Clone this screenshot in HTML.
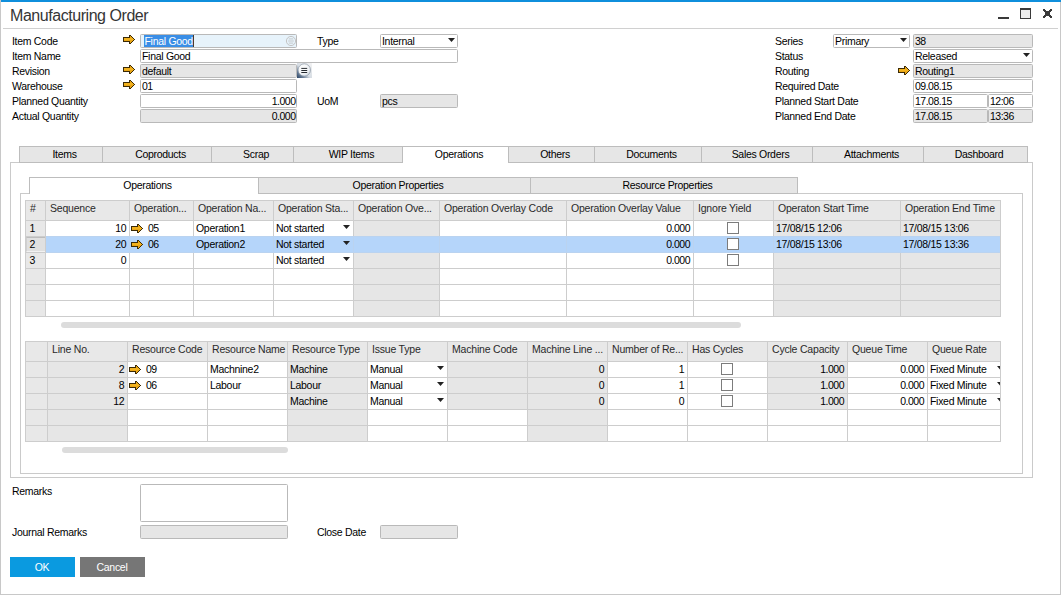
<!DOCTYPE html><html><head><meta charset="utf-8"><style>
html,body{margin:0;padding:0;}
body{width:1061px;height:595px;position:relative;overflow:hidden;background:#fff;font-family:"Liberation Sans",sans-serif;}
.t{position:absolute;white-space:nowrap;line-height:1;letter-spacing:-0.3px;}
.r{position:absolute;box-sizing:border-box;}
</style></head><body>
<div class="r" style="left:1px;top:0px;width:1060px;height:2px;background:#0f8fdc;"></div>
<div class="r" style="left:0px;top:0px;width:1px;height:595px;background:#c8c8c8;"></div>
<div class="r" style="left:1060px;top:2px;width:1px;height:593px;background:#c8c8c8;"></div>
<div class="r" style="left:0px;top:594px;width:1061px;height:1px;background:#c8c8c8;"></div>
<div class="t" style="left:10px;top:8.16px;font-size:16px;color:#353535;letter-spacing:-0.45px;">Manufacturing Order</div>
<div class="r" style="left:3px;top:28px;width:1055px;height:1px;background:#d0d0d0;"></div>
<div class="r" style="left:998px;top:17px;width:11px;height:2px;background:#3a3a3a;"></div>
<div class="r" style="left:1020px;top:8px;width:11px;height:11px;background:#ececec;border:1px solid #3a3a3a;border-top-width:2px;"></div>
<svg class="r" style="left:1043px;top:9px" width="9" height="9" viewBox="0 0 9 9" shape-rendering="crispEdges" fill="#3a3a3a"><rect x="0" y="0" width="2" height="1"/><rect x="7" y="0" width="2" height="1"/><rect x="0" y="1" width="3" height="1"/><rect x="6" y="1" width="3" height="1"/><rect x="1" y="2" width="7" height="1"/><rect x="2" y="3" width="5" height="1"/><rect x="2" y="4" width="5" height="1"/><rect x="2" y="5" width="5" height="1"/><rect x="1" y="6" width="7" height="1"/><rect x="0" y="7" width="3" height="1"/><rect x="6" y="7" width="3" height="1"/><rect x="0" y="8" width="2" height="1"/><rect x="7" y="8" width="2" height="1"/></svg>
<div class="t" style="left:12px;top:36.11px;font-size:10.5px;color:#000;">Item Code</div>
<div class="t" style="left:12px;top:51.11px;font-size:10.5px;color:#000;">Item Name</div>
<div class="t" style="left:12px;top:66.11px;font-size:10.5px;color:#000;">Revision</div>
<div class="t" style="left:12px;top:81.11px;font-size:10.5px;color:#000;">Warehouse</div>
<div class="t" style="left:12px;top:96.11px;font-size:10.5px;color:#000;">Planned Quantity</div>
<div class="t" style="left:12px;top:111.11px;font-size:10.5px;color:#000;">Actual Quantity</div>
<svg class="r" style="left:123px;top:35px" width="12" height="9" viewBox="0 0 12 9" shape-rendering="crispEdges"><rect x="6" y="0" width="2" height="1" fill="#3b2a06"/><rect x="6" y="1" width="1" height="1" fill="#3b2a06"/><rect x="7" y="1" width="1" height="1" fill="#e9a514"/><rect x="8" y="1" width="1" height="1" fill="#3b2a06"/><rect x="0" y="2" width="7" height="1" fill="#3b2a06"/><rect x="7" y="2" width="2" height="1" fill="#e9a514"/><rect x="9" y="2" width="1" height="1" fill="#3b2a06"/><rect x="0" y="3" width="1" height="1" fill="#3b2a06"/><rect x="1" y="3" width="9" height="1" fill="#f2b21e"/><rect x="10" y="3" width="1" height="1" fill="#3b2a06"/><rect x="0" y="4" width="1" height="1" fill="#3b2a06"/><rect x="1" y="4" width="10" height="1" fill="#f2b21e"/><rect x="11" y="4" width="1" height="1" fill="#3b2a06"/><rect x="0" y="5" width="1" height="1" fill="#3b2a06"/><rect x="1" y="5" width="9" height="1" fill="#e9a514"/><rect x="10" y="5" width="1" height="1" fill="#3b2a06"/><rect x="0" y="6" width="7" height="1" fill="#3b2a06"/><rect x="7" y="6" width="2" height="1" fill="#e9a514"/><rect x="9" y="6" width="1" height="1" fill="#3b2a06"/><rect x="6" y="7" width="1" height="1" fill="#3b2a06"/><rect x="7" y="7" width="1" height="1" fill="#e9a514"/><rect x="8" y="7" width="1" height="1" fill="#3b2a06"/><rect x="6" y="8" width="2" height="1" fill="#3b2a06"/></svg>
<svg class="r" style="left:123px;top:65px" width="12" height="9" viewBox="0 0 12 9" shape-rendering="crispEdges"><rect x="6" y="0" width="2" height="1" fill="#3b2a06"/><rect x="6" y="1" width="1" height="1" fill="#3b2a06"/><rect x="7" y="1" width="1" height="1" fill="#e9a514"/><rect x="8" y="1" width="1" height="1" fill="#3b2a06"/><rect x="0" y="2" width="7" height="1" fill="#3b2a06"/><rect x="7" y="2" width="2" height="1" fill="#e9a514"/><rect x="9" y="2" width="1" height="1" fill="#3b2a06"/><rect x="0" y="3" width="1" height="1" fill="#3b2a06"/><rect x="1" y="3" width="9" height="1" fill="#f2b21e"/><rect x="10" y="3" width="1" height="1" fill="#3b2a06"/><rect x="0" y="4" width="1" height="1" fill="#3b2a06"/><rect x="1" y="4" width="10" height="1" fill="#f2b21e"/><rect x="11" y="4" width="1" height="1" fill="#3b2a06"/><rect x="0" y="5" width="1" height="1" fill="#3b2a06"/><rect x="1" y="5" width="9" height="1" fill="#e9a514"/><rect x="10" y="5" width="1" height="1" fill="#3b2a06"/><rect x="0" y="6" width="7" height="1" fill="#3b2a06"/><rect x="7" y="6" width="2" height="1" fill="#e9a514"/><rect x="9" y="6" width="1" height="1" fill="#3b2a06"/><rect x="6" y="7" width="1" height="1" fill="#3b2a06"/><rect x="7" y="7" width="1" height="1" fill="#e9a514"/><rect x="8" y="7" width="1" height="1" fill="#3b2a06"/><rect x="6" y="8" width="2" height="1" fill="#3b2a06"/></svg>
<svg class="r" style="left:123px;top:80px" width="12" height="9" viewBox="0 0 12 9" shape-rendering="crispEdges"><rect x="6" y="0" width="2" height="1" fill="#3b2a06"/><rect x="6" y="1" width="1" height="1" fill="#3b2a06"/><rect x="7" y="1" width="1" height="1" fill="#e9a514"/><rect x="8" y="1" width="1" height="1" fill="#3b2a06"/><rect x="0" y="2" width="7" height="1" fill="#3b2a06"/><rect x="7" y="2" width="2" height="1" fill="#e9a514"/><rect x="9" y="2" width="1" height="1" fill="#3b2a06"/><rect x="0" y="3" width="1" height="1" fill="#3b2a06"/><rect x="1" y="3" width="9" height="1" fill="#f2b21e"/><rect x="10" y="3" width="1" height="1" fill="#3b2a06"/><rect x="0" y="4" width="1" height="1" fill="#3b2a06"/><rect x="1" y="4" width="10" height="1" fill="#f2b21e"/><rect x="11" y="4" width="1" height="1" fill="#3b2a06"/><rect x="0" y="5" width="1" height="1" fill="#3b2a06"/><rect x="1" y="5" width="9" height="1" fill="#e9a514"/><rect x="10" y="5" width="1" height="1" fill="#3b2a06"/><rect x="0" y="6" width="7" height="1" fill="#3b2a06"/><rect x="7" y="6" width="2" height="1" fill="#e9a514"/><rect x="9" y="6" width="1" height="1" fill="#3b2a06"/><rect x="6" y="7" width="1" height="1" fill="#3b2a06"/><rect x="7" y="7" width="1" height="1" fill="#e9a514"/><rect x="8" y="7" width="1" height="1" fill="#3b2a06"/><rect x="6" y="8" width="2" height="1" fill="#3b2a06"/></svg>
<div class="r" style="left:140px;top:34px;width:157px;height:14px;background:#e7f3fb;border:1px solid #b9b9b9;border-radius:1.5px;"></div>
<div class="r" style="left:144px;top:35px;width:49px;height:12px;background:#3a8ee6;"></div>
<div class="t" style="left:144.5px;top:36.11px;font-size:10.5px;color:#fff;">Final Good</div>
<div class="r" style="left:193px;top:35px;width:1px;height:12px;background:#4a3a2a;"></div>
<svg class="r" style="left:285px;top:35px" width="12" height="12" viewBox="0 0 12 12"><circle cx="6" cy="6" r="4.6" fill="none" stroke="#c4c4c4" stroke-width="1"/><path d="M3.8 3.9H8.2M3.2 6H8.8M3.8 8.1H8.2" stroke="#b8b8b8" stroke-width="0.7"/></svg>
<div class="r" style="left:140px;top:49px;width:318px;height:14px;background:#fff;border:1px solid #b9b9b9;border-radius:1.5px;"></div>
<div class="t" style="left:142px;top:51.11px;font-size:10.5px;color:#000;">Final Good</div>
<div class="r" style="left:140px;top:64px;width:157px;height:14px;background:#e6e6e6;border:1px solid #b9b9b9;border-radius:1.5px;"></div>
<div class="t" style="left:142px;top:66.11px;font-size:10.5px;color:#000;">default</div>
<svg class="r" style="left:297px;top:63px" width="15" height="15" viewBox="0 0 15 15"><defs><linearGradient id="g1" x1="0" y1="1" x2="1" y2="0"><stop offset="0" stop-color="#2a4464"/><stop offset="0.22" stop-color="#6a7e98"/><stop offset="0.45" stop-color="#d6dce3"/><stop offset="1" stop-color="#f4f4f4"/></linearGradient><radialGradient id="g2" cx="0.4" cy="0.35" r="0.7"><stop offset="0" stop-color="#ffffff"/><stop offset="0.7" stop-color="#eef1f4"/><stop offset="1" stop-color="#c9d2dc"/></radialGradient></defs><rect x="0" y="0" width="15" height="15" fill="url(#g1)"/><circle cx="7.3" cy="7" r="6.2" fill="url(#g2)" stroke="#7d8a98" stroke-width="0.6"/><path d="M4.3 5.4H10.2M4.3 7.5H10.2M4.3 9.5H10.2" stroke="#252a30" stroke-width="1"/></svg>
<div class="r" style="left:140px;top:79px;width:157px;height:14px;background:#fff;border:1px solid #b9b9b9;border-radius:1.5px;"></div>
<div class="t" style="left:142px;top:81.11px;font-size:10.5px;color:#000;letter-spacing:-0.5px;">01</div>
<div class="r" style="left:140px;top:94px;width:157px;height:14px;background:#fff;border:1px solid #b9b9b9;border-radius:1.5px;"></div>
<div class="t" style="right:765.5px;top:96.11px;font-size:10.5px;color:#000;text-align:right;letter-spacing:-0.5px;">1.000</div>
<div class="r" style="left:140px;top:109px;width:157px;height:14px;background:#e6e6e6;border:1px solid #b9b9b9;border-radius:1.5px;"></div>
<div class="t" style="right:765.5px;top:111.11px;font-size:10.5px;color:#000;text-align:right;letter-spacing:-0.5px;">0.000</div>
<div class="t" style="left:317px;top:36.11px;font-size:10.5px;color:#000;">Type</div>
<div class="r" style="left:380px;top:34px;width:78px;height:14px;background:#fff;border:1px solid #b9b9b9;border-radius:1.5px;"></div>
<div class="t" style="left:382px;top:36.11px;font-size:10.5px;color:#000;">Internal</div>
<svg class="r" style="left:448px;top:38px" width="7" height="4.0" viewBox="0 0 7 4.0"><path d="M0 0 H7 L3.5 4.0 Z" fill="#222"/></svg>
<div class="t" style="left:317px;top:96.11px;font-size:10.5px;color:#000;">UoM</div>
<div class="r" style="left:380px;top:94px;width:78px;height:14px;background:#e6e6e6;border:1px solid #b9b9b9;border-radius:1.5px;"></div>
<div class="t" style="left:382px;top:96.11px;font-size:10.5px;color:#000;">pcs</div>
<div class="t" style="left:775px;top:36.11px;font-size:10.5px;color:#000;">Series</div>
<div class="t" style="left:775px;top:51.11px;font-size:10.5px;color:#000;">Status</div>
<div class="t" style="left:775px;top:66.11px;font-size:10.5px;color:#000;">Routing</div>
<div class="t" style="left:775px;top:81.11px;font-size:10.5px;color:#000;">Required Date</div>
<div class="t" style="left:775px;top:96.11px;font-size:10.5px;color:#000;">Planned Start Date</div>
<div class="t" style="left:775px;top:111.11px;font-size:10.5px;color:#000;">Planned End Date</div>
<div class="r" style="left:833px;top:34px;width:77px;height:14px;background:#fff;border:1px solid #b9b9b9;border-radius:1.5px;"></div>
<div class="t" style="left:835px;top:36.11px;font-size:10.5px;color:#000;">Primary</div>
<svg class="r" style="left:900px;top:38px" width="7" height="4.0" viewBox="0 0 7 4.0"><path d="M0 0 H7 L3.5 4.0 Z" fill="#222"/></svg>
<div class="r" style="left:913px;top:34px;width:120px;height:14px;background:#e6e6e6;border:1px solid #b9b9b9;border-radius:1.5px;"></div>
<div class="t" style="left:915px;top:36.11px;font-size:10.5px;color:#000;letter-spacing:-0.5px;">38</div>
<div class="r" style="left:913px;top:49px;width:120px;height:14px;background:#fff;border:1px solid #b9b9b9;border-radius:1.5px;"></div>
<div class="t" style="left:915px;top:51.11px;font-size:10.5px;color:#000;">Released</div>
<svg class="r" style="left:1023px;top:53px" width="7" height="4.0" viewBox="0 0 7 4.0"><path d="M0 0 H7 L3.5 4.0 Z" fill="#222"/></svg>
<svg class="r" style="left:898px;top:66px" width="12" height="9" viewBox="0 0 12 9" shape-rendering="crispEdges"><rect x="6" y="0" width="2" height="1" fill="#3b2a06"/><rect x="6" y="1" width="1" height="1" fill="#3b2a06"/><rect x="7" y="1" width="1" height="1" fill="#e9a514"/><rect x="8" y="1" width="1" height="1" fill="#3b2a06"/><rect x="0" y="2" width="7" height="1" fill="#3b2a06"/><rect x="7" y="2" width="2" height="1" fill="#e9a514"/><rect x="9" y="2" width="1" height="1" fill="#3b2a06"/><rect x="0" y="3" width="1" height="1" fill="#3b2a06"/><rect x="1" y="3" width="9" height="1" fill="#f2b21e"/><rect x="10" y="3" width="1" height="1" fill="#3b2a06"/><rect x="0" y="4" width="1" height="1" fill="#3b2a06"/><rect x="1" y="4" width="10" height="1" fill="#f2b21e"/><rect x="11" y="4" width="1" height="1" fill="#3b2a06"/><rect x="0" y="5" width="1" height="1" fill="#3b2a06"/><rect x="1" y="5" width="9" height="1" fill="#e9a514"/><rect x="10" y="5" width="1" height="1" fill="#3b2a06"/><rect x="0" y="6" width="7" height="1" fill="#3b2a06"/><rect x="7" y="6" width="2" height="1" fill="#e9a514"/><rect x="9" y="6" width="1" height="1" fill="#3b2a06"/><rect x="6" y="7" width="1" height="1" fill="#3b2a06"/><rect x="7" y="7" width="1" height="1" fill="#e9a514"/><rect x="8" y="7" width="1" height="1" fill="#3b2a06"/><rect x="6" y="8" width="2" height="1" fill="#3b2a06"/></svg>
<div class="r" style="left:913px;top:64px;width:120px;height:14px;background:#e6e6e6;border:1px solid #b9b9b9;border-radius:1.5px;"></div>
<div class="t" style="left:915px;top:66.11px;font-size:10.5px;color:#000;">Routing1</div>
<div class="r" style="left:913px;top:79px;width:120px;height:14px;background:#fff;border:1px solid #b9b9b9;border-radius:1.5px;"></div>
<div class="t" style="left:915px;top:81.11px;font-size:10.5px;color:#000;letter-spacing:-0.5px;">09.08.15</div>
<div class="r" style="left:913px;top:94px;width:75px;height:14px;background:#fff;border:1px solid #b9b9b9;border-radius:1.5px;"></div>
<div class="t" style="left:915px;top:96.11px;font-size:10.5px;color:#000;letter-spacing:-0.5px;">17.08.15</div>
<div class="r" style="left:988px;top:94px;width:45px;height:14px;background:#fff;border:1px solid #b9b9b9;border-radius:1.5px;"></div>
<div class="t" style="left:990px;top:96.11px;font-size:10.5px;color:#000;letter-spacing:-0.5px;">12:06</div>
<div class="r" style="left:913px;top:109px;width:75px;height:14px;background:#e6e6e6;border:1px solid #b9b9b9;border-radius:1.5px;"></div>
<div class="t" style="left:915px;top:111.11px;font-size:10.5px;color:#000;letter-spacing:-0.5px;">17.08.15</div>
<div class="r" style="left:988px;top:109px;width:45px;height:14px;background:#e6e6e6;border:1px solid #b9b9b9;border-radius:1.5px;"></div>
<div class="t" style="left:990px;top:111.11px;font-size:10.5px;color:#000;letter-spacing:-0.5px;">13:36</div>
<div class="r" style="left:10px;top:162px;width:1023px;height:316px;border:1px solid #cacaca;"></div>
<div class="r" style="left:19px;top:146px;width:84px;height:17px;background:#e6e6e6;border:1px solid #bdbdbd;"></div>
<div class="t" style="left:23.0px;width:83px;top:149.11px;font-size:10.5px;color:#000;text-align:center;">Items</div>
<div class="r" style="left:102px;top:146px;width:110px;height:17px;background:#e6e6e6;border:1px solid #bdbdbd;"></div>
<div class="t" style="left:106.0px;width:109px;top:149.11px;font-size:10.5px;color:#000;text-align:center;">Coproducts</div>
<div class="r" style="left:211px;top:146px;width:83px;height:17px;background:#e6e6e6;border:1px solid #bdbdbd;"></div>
<div class="t" style="left:215.0px;width:82px;top:149.11px;font-size:10.5px;color:#000;text-align:center;">Scrap</div>
<div class="r" style="left:293px;top:146px;width:110px;height:17px;background:#e6e6e6;border:1px solid #bdbdbd;"></div>
<div class="t" style="left:297.0px;width:109px;top:149.11px;font-size:10.5px;color:#000;text-align:center;">WIP Items</div>
<div class="r" style="left:402px;top:146px;width:107px;height:17px;background:#fff;border:1px solid #bdbdbd;border-bottom:none;"></div>
<div class="t" style="left:406.0px;width:106px;top:149.11px;font-size:10.5px;color:#000;text-align:center;">Operations</div>
<div class="r" style="left:508px;top:146px;width:87px;height:17px;background:#e6e6e6;border:1px solid #bdbdbd;"></div>
<div class="t" style="left:512.0px;width:86px;top:149.11px;font-size:10.5px;color:#000;text-align:center;">Others</div>
<div class="r" style="left:594px;top:146px;width:108px;height:17px;background:#e6e6e6;border:1px solid #bdbdbd;"></div>
<div class="t" style="left:598.0px;width:107px;top:149.11px;font-size:10.5px;color:#000;text-align:center;">Documents</div>
<div class="r" style="left:701px;top:146px;width:112px;height:17px;background:#e6e6e6;border:1px solid #bdbdbd;"></div>
<div class="t" style="left:705.0px;width:111px;top:149.11px;font-size:10.5px;color:#000;text-align:center;">Sales Orders</div>
<div class="r" style="left:812px;top:146px;width:112px;height:17px;background:#e6e6e6;border:1px solid #bdbdbd;"></div>
<div class="t" style="left:816.0px;width:111px;top:149.11px;font-size:10.5px;color:#000;text-align:center;">Attachments</div>
<div class="r" style="left:923px;top:146px;width:105px;height:17px;background:#e6e6e6;border:1px solid #bdbdbd;"></div>
<div class="t" style="left:927.0px;width:104px;top:149.11px;font-size:10.5px;color:#000;text-align:center;">Dashboard</div>
<div class="r" style="left:20px;top:193px;width:1003px;height:281px;border:1px solid #cacaca;"></div>
<div class="r" style="left:29px;top:177px;width:230px;height:17px;background:#fff;border:1px solid #bdbdbd;border-bottom:none;"></div>
<div class="t" style="left:33.0px;width:229px;top:180.11px;font-size:10.5px;color:#000;text-align:center;">Operations</div>
<div class="r" style="left:258px;top:177px;width:273px;height:17px;background:#e6e6e6;border:1px solid #bdbdbd;"></div>
<div class="t" style="left:262.0px;width:272px;top:180.11px;font-size:10.5px;color:#000;text-align:center;">Operation Properties</div>
<div class="r" style="left:530px;top:177px;width:268px;height:17px;background:#e6e6e6;border:1px solid #bdbdbd;"></div>
<div class="t" style="left:534.0px;width:267px;top:180.11px;font-size:10.5px;color:#000;text-align:center;">Resource Properties</div>
<div class="r" style="left:25px;top:200px;width:976px;height:21px;background:#e8e8e8;"></div>
<div class="r" style="left:25px;top:220px;width:21px;height:17px;background:#e8e8e8;"></div>
<div class="r" style="left:45px;top:220px;width:85px;height:17px;background:#fff;"></div>
<div class="r" style="left:129px;top:220px;width:65px;height:17px;background:#fff;"></div>
<div class="r" style="left:193px;top:220px;width:81px;height:17px;background:#fff;"></div>
<div class="r" style="left:273px;top:220px;width:81px;height:17px;background:#fff;"></div>
<div class="r" style="left:353px;top:220px;width:87px;height:17px;background:#e6e6e6;"></div>
<div class="r" style="left:439px;top:220px;width:128px;height:17px;background:#fff;"></div>
<div class="r" style="left:566px;top:220px;width:128px;height:17px;background:#fff;"></div>
<div class="r" style="left:693px;top:220px;width:81px;height:17px;background:#fff;"></div>
<div class="r" style="left:773px;top:220px;width:128px;height:17px;background:#e6e6e6;"></div>
<div class="r" style="left:900px;top:220px;width:101px;height:17px;background:#e6e6e6;"></div>
<div class="r" style="left:25px;top:236px;width:21px;height:17px;background:#e8e8e8;"></div>
<div class="r" style="left:45px;top:236px;width:85px;height:17px;background:#b5d5fa;"></div>
<div class="r" style="left:129px;top:236px;width:65px;height:17px;background:#b5d5fa;"></div>
<div class="r" style="left:193px;top:236px;width:81px;height:17px;background:#b5d5fa;"></div>
<div class="r" style="left:273px;top:236px;width:81px;height:17px;background:#b5d5fa;"></div>
<div class="r" style="left:353px;top:236px;width:87px;height:17px;background:#b5d5fa;"></div>
<div class="r" style="left:439px;top:236px;width:128px;height:17px;background:#b5d5fa;"></div>
<div class="r" style="left:566px;top:236px;width:128px;height:17px;background:#b5d5fa;"></div>
<div class="r" style="left:693px;top:236px;width:81px;height:17px;background:#b5d5fa;"></div>
<div class="r" style="left:773px;top:236px;width:128px;height:17px;background:#b5d5fa;"></div>
<div class="r" style="left:900px;top:236px;width:101px;height:17px;background:#b5d5fa;"></div>
<div class="r" style="left:25px;top:252px;width:21px;height:17px;background:#e8e8e8;"></div>
<div class="r" style="left:45px;top:252px;width:85px;height:17px;background:#fff;"></div>
<div class="r" style="left:129px;top:252px;width:65px;height:17px;background:#fff;"></div>
<div class="r" style="left:193px;top:252px;width:81px;height:17px;background:#fff;"></div>
<div class="r" style="left:273px;top:252px;width:81px;height:17px;background:#fff;"></div>
<div class="r" style="left:353px;top:252px;width:87px;height:17px;background:#e6e6e6;"></div>
<div class="r" style="left:439px;top:252px;width:128px;height:17px;background:#fff;"></div>
<div class="r" style="left:566px;top:252px;width:128px;height:17px;background:#fff;"></div>
<div class="r" style="left:693px;top:252px;width:81px;height:17px;background:#fff;"></div>
<div class="r" style="left:773px;top:252px;width:128px;height:17px;background:#e6e6e6;"></div>
<div class="r" style="left:900px;top:252px;width:101px;height:17px;background:#e6e6e6;"></div>
<div class="r" style="left:25px;top:268px;width:21px;height:17px;background:#e8e8e8;"></div>
<div class="r" style="left:45px;top:268px;width:85px;height:17px;background:#fff;"></div>
<div class="r" style="left:129px;top:268px;width:65px;height:17px;background:#fff;"></div>
<div class="r" style="left:193px;top:268px;width:81px;height:17px;background:#fff;"></div>
<div class="r" style="left:273px;top:268px;width:81px;height:17px;background:#fff;"></div>
<div class="r" style="left:353px;top:268px;width:87px;height:17px;background:#e6e6e6;"></div>
<div class="r" style="left:439px;top:268px;width:128px;height:17px;background:#fff;"></div>
<div class="r" style="left:566px;top:268px;width:128px;height:17px;background:#fff;"></div>
<div class="r" style="left:693px;top:268px;width:81px;height:17px;background:#fff;"></div>
<div class="r" style="left:773px;top:268px;width:128px;height:17px;background:#e6e6e6;"></div>
<div class="r" style="left:900px;top:268px;width:101px;height:17px;background:#e6e6e6;"></div>
<div class="r" style="left:25px;top:284px;width:21px;height:17px;background:#e8e8e8;"></div>
<div class="r" style="left:45px;top:284px;width:85px;height:17px;background:#fff;"></div>
<div class="r" style="left:129px;top:284px;width:65px;height:17px;background:#fff;"></div>
<div class="r" style="left:193px;top:284px;width:81px;height:17px;background:#fff;"></div>
<div class="r" style="left:273px;top:284px;width:81px;height:17px;background:#fff;"></div>
<div class="r" style="left:353px;top:284px;width:87px;height:17px;background:#e6e6e6;"></div>
<div class="r" style="left:439px;top:284px;width:128px;height:17px;background:#fff;"></div>
<div class="r" style="left:566px;top:284px;width:128px;height:17px;background:#fff;"></div>
<div class="r" style="left:693px;top:284px;width:81px;height:17px;background:#fff;"></div>
<div class="r" style="left:773px;top:284px;width:128px;height:17px;background:#e6e6e6;"></div>
<div class="r" style="left:900px;top:284px;width:101px;height:17px;background:#e6e6e6;"></div>
<div class="r" style="left:25px;top:300px;width:21px;height:17px;background:#e8e8e8;"></div>
<div class="r" style="left:45px;top:300px;width:85px;height:17px;background:#fff;"></div>
<div class="r" style="left:129px;top:300px;width:65px;height:17px;background:#fff;"></div>
<div class="r" style="left:193px;top:300px;width:81px;height:17px;background:#fff;"></div>
<div class="r" style="left:273px;top:300px;width:81px;height:17px;background:#fff;"></div>
<div class="r" style="left:353px;top:300px;width:87px;height:17px;background:#e6e6e6;"></div>
<div class="r" style="left:439px;top:300px;width:128px;height:17px;background:#fff;"></div>
<div class="r" style="left:566px;top:300px;width:128px;height:17px;background:#fff;"></div>
<div class="r" style="left:693px;top:300px;width:81px;height:17px;background:#fff;"></div>
<div class="r" style="left:773px;top:300px;width:128px;height:17px;background:#e6e6e6;"></div>
<div class="r" style="left:900px;top:300px;width:101px;height:17px;background:#e6e6e6;"></div>
<div class="r" style="left:25px;top:200px;width:1px;height:117px;background:#cdcdcd;"></div>
<div class="r" style="left:45px;top:200px;width:1px;height:117px;background:#cdcdcd;"></div>
<div class="r" style="left:129px;top:200px;width:1px;height:117px;background:#cdcdcd;"></div>
<div class="r" style="left:193px;top:200px;width:1px;height:117px;background:#cdcdcd;"></div>
<div class="r" style="left:273px;top:200px;width:1px;height:117px;background:#cdcdcd;"></div>
<div class="r" style="left:353px;top:200px;width:1px;height:117px;background:#cdcdcd;"></div>
<div class="r" style="left:439px;top:200px;width:1px;height:117px;background:#cdcdcd;"></div>
<div class="r" style="left:566px;top:200px;width:1px;height:117px;background:#cdcdcd;"></div>
<div class="r" style="left:693px;top:200px;width:1px;height:117px;background:#cdcdcd;"></div>
<div class="r" style="left:773px;top:200px;width:1px;height:117px;background:#cdcdcd;"></div>
<div class="r" style="left:900px;top:200px;width:1px;height:117px;background:#cdcdcd;"></div>
<div class="r" style="left:1000px;top:200px;width:1px;height:117px;background:#cdcdcd;"></div>
<div class="r" style="left:25px;top:200px;width:976px;height:1px;background:#cdcdcd;"></div>
<div class="r" style="left:25px;top:220px;width:976px;height:1px;background:#cdcdcd;"></div>
<div class="r" style="left:25px;top:236px;width:976px;height:1px;background:#cdcdcd;"></div>
<div class="r" style="left:25px;top:252px;width:976px;height:1px;background:#cdcdcd;"></div>
<div class="r" style="left:25px;top:268px;width:976px;height:1px;background:#cdcdcd;"></div>
<div class="r" style="left:25px;top:284px;width:976px;height:1px;background:#cdcdcd;"></div>
<div class="r" style="left:25px;top:300px;width:976px;height:1px;background:#cdcdcd;"></div>
<div class="r" style="left:25px;top:316px;width:976px;height:1px;background:#cdcdcd;"></div>
<div class="r" style="left:46px;top:236px;width:954px;height:17px;background:rgba(181,213,250,0.78);"></div>
<div class="r" style="left:26px;top:237px;width:19px;height:15px;background:#e0e0e0;border-top:1px solid #bdbdbd;border-left:1px solid #d0d0d0;border-bottom:1px solid #f2f2f2;"></div>
<div class="t" style="left:30px;top:203.11px;font-size:10.5px;color:#2a2a2a;letter-spacing:-0.2px;">#</div>
<div class="t" style="left:50px;top:203.11px;font-size:10.5px;color:#2a2a2a;letter-spacing:-0.2px;">Sequence</div>
<div class="t" style="left:134px;top:203.11px;font-size:10.5px;color:#2a2a2a;letter-spacing:-0.2px;">Operation...</div>
<div class="t" style="left:198px;top:203.11px;font-size:10.5px;color:#2a2a2a;letter-spacing:-0.2px;">Operation Na...</div>
<div class="t" style="left:278px;top:203.11px;font-size:10.5px;color:#2a2a2a;letter-spacing:-0.2px;">Operation Sta...</div>
<div class="t" style="left:358px;top:203.11px;font-size:10.5px;color:#2a2a2a;letter-spacing:-0.2px;">Operation Ove...</div>
<div class="t" style="left:444px;top:203.11px;font-size:10.5px;color:#2a2a2a;letter-spacing:-0.2px;">Operation Overlay Code</div>
<div class="t" style="left:571px;top:203.11px;font-size:10.5px;color:#2a2a2a;letter-spacing:-0.2px;">Operation Overlay Value</div>
<div class="t" style="left:698px;top:203.11px;font-size:10.5px;color:#2a2a2a;letter-spacing:-0.2px;">Ignore Yield</div>
<div class="t" style="left:778px;top:203.11px;font-size:10.5px;color:#2a2a2a;letter-spacing:-0.2px;">Operaton Start Time</div>
<div class="t" style="left:905px;top:203.11px;font-size:10.5px;color:#2a2a2a;letter-spacing:-0.2px;">Operation End Time</div>
<div class="t" style="left:29.5px;top:223.11px;font-size:10.5px;color:#000;letter-spacing:-0.5px;">1</div>
<div class="t" style="right:935px;top:223.11px;font-size:10.5px;color:#000;text-align:right;letter-spacing:-0.5px;">10</div>
<svg class="r" style="left:131px;top:224px" width="12" height="9" viewBox="0 0 12 9" shape-rendering="crispEdges"><rect x="6" y="0" width="2" height="1" fill="#3b2a06"/><rect x="6" y="1" width="1" height="1" fill="#3b2a06"/><rect x="7" y="1" width="1" height="1" fill="#e9a514"/><rect x="8" y="1" width="1" height="1" fill="#3b2a06"/><rect x="0" y="2" width="7" height="1" fill="#3b2a06"/><rect x="7" y="2" width="2" height="1" fill="#e9a514"/><rect x="9" y="2" width="1" height="1" fill="#3b2a06"/><rect x="0" y="3" width="1" height="1" fill="#3b2a06"/><rect x="1" y="3" width="9" height="1" fill="#f2b21e"/><rect x="10" y="3" width="1" height="1" fill="#3b2a06"/><rect x="0" y="4" width="1" height="1" fill="#3b2a06"/><rect x="1" y="4" width="10" height="1" fill="#f2b21e"/><rect x="11" y="4" width="1" height="1" fill="#3b2a06"/><rect x="0" y="5" width="1" height="1" fill="#3b2a06"/><rect x="1" y="5" width="9" height="1" fill="#e9a514"/><rect x="10" y="5" width="1" height="1" fill="#3b2a06"/><rect x="0" y="6" width="7" height="1" fill="#3b2a06"/><rect x="7" y="6" width="2" height="1" fill="#e9a514"/><rect x="9" y="6" width="1" height="1" fill="#3b2a06"/><rect x="6" y="7" width="1" height="1" fill="#3b2a06"/><rect x="7" y="7" width="1" height="1" fill="#e9a514"/><rect x="8" y="7" width="1" height="1" fill="#3b2a06"/><rect x="6" y="8" width="2" height="1" fill="#3b2a06"/></svg>
<div class="t" style="left:148px;top:223.11px;font-size:10.5px;color:#000;letter-spacing:-0.5px;">05</div>
<div class="t" style="left:196px;top:223.11px;font-size:10.5px;color:#000;">Operation1</div>
<div class="t" style="left:276px;top:223.11px;font-size:10.5px;color:#000;">Not started</div>
<svg class="r" style="left:343px;top:225px" width="7" height="4.0" viewBox="0 0 7 4.0"><path d="M0 0 H7 L3.5 4.0 Z" fill="#222"/></svg>
<div class="t" style="right:371px;top:223.11px;font-size:10.5px;color:#000;text-align:right;letter-spacing:-0.5px;">0.000</div>
<div class="r" style="left:727px;top:222px;width:12px;height:12px;background:#fff;border:1px solid #7c7c7c;"></div>
<div class="t" style="left:776px;top:223.11px;font-size:10.5px;color:#000;">17/08/15 12:06</div>
<div class="t" style="left:903px;top:223.11px;font-size:10.5px;color:#000;">17/08/15 13:06</div>
<div class="t" style="left:29.5px;top:239.11px;font-size:10.5px;color:#000;letter-spacing:-0.5px;">2</div>
<div class="t" style="right:935px;top:239.11px;font-size:10.5px;color:#000;text-align:right;letter-spacing:-0.5px;">20</div>
<svg class="r" style="left:131px;top:240px" width="12" height="9" viewBox="0 0 12 9" shape-rendering="crispEdges"><rect x="6" y="0" width="2" height="1" fill="#3b2a06"/><rect x="6" y="1" width="1" height="1" fill="#3b2a06"/><rect x="7" y="1" width="1" height="1" fill="#e9a514"/><rect x="8" y="1" width="1" height="1" fill="#3b2a06"/><rect x="0" y="2" width="7" height="1" fill="#3b2a06"/><rect x="7" y="2" width="2" height="1" fill="#e9a514"/><rect x="9" y="2" width="1" height="1" fill="#3b2a06"/><rect x="0" y="3" width="1" height="1" fill="#3b2a06"/><rect x="1" y="3" width="9" height="1" fill="#f2b21e"/><rect x="10" y="3" width="1" height="1" fill="#3b2a06"/><rect x="0" y="4" width="1" height="1" fill="#3b2a06"/><rect x="1" y="4" width="10" height="1" fill="#f2b21e"/><rect x="11" y="4" width="1" height="1" fill="#3b2a06"/><rect x="0" y="5" width="1" height="1" fill="#3b2a06"/><rect x="1" y="5" width="9" height="1" fill="#e9a514"/><rect x="10" y="5" width="1" height="1" fill="#3b2a06"/><rect x="0" y="6" width="7" height="1" fill="#3b2a06"/><rect x="7" y="6" width="2" height="1" fill="#e9a514"/><rect x="9" y="6" width="1" height="1" fill="#3b2a06"/><rect x="6" y="7" width="1" height="1" fill="#3b2a06"/><rect x="7" y="7" width="1" height="1" fill="#e9a514"/><rect x="8" y="7" width="1" height="1" fill="#3b2a06"/><rect x="6" y="8" width="2" height="1" fill="#3b2a06"/></svg>
<div class="t" style="left:148px;top:239.11px;font-size:10.5px;color:#000;letter-spacing:-0.5px;">06</div>
<div class="t" style="left:196px;top:239.11px;font-size:10.5px;color:#000;">Operation2</div>
<div class="t" style="left:276px;top:239.11px;font-size:10.5px;color:#000;">Not started</div>
<svg class="r" style="left:343px;top:241px" width="7" height="4.0" viewBox="0 0 7 4.0"><path d="M0 0 H7 L3.5 4.0 Z" fill="#222"/></svg>
<div class="t" style="right:371px;top:239.11px;font-size:10.5px;color:#000;text-align:right;letter-spacing:-0.5px;">0.000</div>
<div class="r" style="left:727px;top:238px;width:12px;height:12px;background:#fff;border:1px solid #7c7c7c;"></div>
<div class="t" style="left:776px;top:239.11px;font-size:10.5px;color:#000;">17/08/15 13:06</div>
<div class="t" style="left:903px;top:239.11px;font-size:10.5px;color:#000;">17/08/15 13:36</div>
<div class="t" style="left:29.5px;top:255.11px;font-size:10.5px;color:#000;letter-spacing:-0.5px;">3</div>
<div class="t" style="right:935px;top:255.11px;font-size:10.5px;color:#000;text-align:right;letter-spacing:-0.5px;">0</div>
<div class="t" style="left:276px;top:255.11px;font-size:10.5px;color:#000;">Not started</div>
<svg class="r" style="left:343px;top:257px" width="7" height="4.0" viewBox="0 0 7 4.0"><path d="M0 0 H7 L3.5 4.0 Z" fill="#222"/></svg>
<div class="t" style="right:371px;top:255.11px;font-size:10.5px;color:#000;text-align:right;letter-spacing:-0.5px;">0.000</div>
<div class="r" style="left:727px;top:254px;width:12px;height:12px;background:#fff;border:1px solid #7c7c7c;"></div>
<div class="r" style="left:61px;top:322px;width:680px;height:6px;background:#dcdcdc;border:none;border-radius:3px;"></div>
<div class="r" style="left:25px;top:341px;width:976px;height:21px;background:#e8e8e8;"></div>
<div class="r" style="left:25px;top:361px;width:23px;height:17px;background:#e8e8e8;"></div>
<div class="r" style="left:47px;top:361px;width:81px;height:17px;background:#e6e6e6;"></div>
<div class="r" style="left:127px;top:361px;width:81px;height:17px;background:#fff;"></div>
<div class="r" style="left:207px;top:361px;width:81px;height:17px;background:#fff;"></div>
<div class="r" style="left:287px;top:361px;width:81px;height:17px;background:#e6e6e6;"></div>
<div class="r" style="left:367px;top:361px;width:81px;height:17px;background:#fff;"></div>
<div class="r" style="left:447px;top:361px;width:81px;height:17px;background:#e6e6e6;"></div>
<div class="r" style="left:527px;top:361px;width:81px;height:17px;background:#e6e6e6;"></div>
<div class="r" style="left:607px;top:361px;width:81px;height:17px;background:#fff;"></div>
<div class="r" style="left:687px;top:361px;width:81px;height:17px;background:#fff;"></div>
<div class="r" style="left:767px;top:361px;width:81px;height:17px;background:#e6e6e6;"></div>
<div class="r" style="left:847px;top:361px;width:81px;height:17px;background:#fff;"></div>
<div class="r" style="left:927px;top:361px;width:74px;height:17px;background:#fff;"></div>
<div class="r" style="left:25px;top:377px;width:23px;height:17px;background:#e8e8e8;"></div>
<div class="r" style="left:47px;top:377px;width:81px;height:17px;background:#e6e6e6;"></div>
<div class="r" style="left:127px;top:377px;width:81px;height:17px;background:#fff;"></div>
<div class="r" style="left:207px;top:377px;width:81px;height:17px;background:#fff;"></div>
<div class="r" style="left:287px;top:377px;width:81px;height:17px;background:#e6e6e6;"></div>
<div class="r" style="left:367px;top:377px;width:81px;height:17px;background:#fff;"></div>
<div class="r" style="left:447px;top:377px;width:81px;height:17px;background:#e6e6e6;"></div>
<div class="r" style="left:527px;top:377px;width:81px;height:17px;background:#e6e6e6;"></div>
<div class="r" style="left:607px;top:377px;width:81px;height:17px;background:#fff;"></div>
<div class="r" style="left:687px;top:377px;width:81px;height:17px;background:#fff;"></div>
<div class="r" style="left:767px;top:377px;width:81px;height:17px;background:#e6e6e6;"></div>
<div class="r" style="left:847px;top:377px;width:81px;height:17px;background:#fff;"></div>
<div class="r" style="left:927px;top:377px;width:74px;height:17px;background:#fff;"></div>
<div class="r" style="left:25px;top:393px;width:23px;height:17px;background:#e8e8e8;"></div>
<div class="r" style="left:47px;top:393px;width:81px;height:17px;background:#e6e6e6;"></div>
<div class="r" style="left:127px;top:393px;width:81px;height:17px;background:#fff;"></div>
<div class="r" style="left:207px;top:393px;width:81px;height:17px;background:#fff;"></div>
<div class="r" style="left:287px;top:393px;width:81px;height:17px;background:#e6e6e6;"></div>
<div class="r" style="left:367px;top:393px;width:81px;height:17px;background:#fff;"></div>
<div class="r" style="left:447px;top:393px;width:81px;height:17px;background:#e6e6e6;"></div>
<div class="r" style="left:527px;top:393px;width:81px;height:17px;background:#e6e6e6;"></div>
<div class="r" style="left:607px;top:393px;width:81px;height:17px;background:#fff;"></div>
<div class="r" style="left:687px;top:393px;width:81px;height:17px;background:#fff;"></div>
<div class="r" style="left:767px;top:393px;width:81px;height:17px;background:#e6e6e6;"></div>
<div class="r" style="left:847px;top:393px;width:81px;height:17px;background:#fff;"></div>
<div class="r" style="left:927px;top:393px;width:74px;height:17px;background:#fff;"></div>
<div class="r" style="left:25px;top:409px;width:23px;height:17px;background:#e8e8e8;"></div>
<div class="r" style="left:47px;top:409px;width:81px;height:17px;background:#e6e6e6;"></div>
<div class="r" style="left:127px;top:409px;width:81px;height:17px;background:#fff;"></div>
<div class="r" style="left:207px;top:409px;width:81px;height:17px;background:#fff;"></div>
<div class="r" style="left:287px;top:409px;width:81px;height:17px;background:#e6e6e6;"></div>
<div class="r" style="left:367px;top:409px;width:81px;height:17px;background:#fff;"></div>
<div class="r" style="left:447px;top:409px;width:81px;height:17px;background:#fff;"></div>
<div class="r" style="left:527px;top:409px;width:81px;height:17px;background:#e6e6e6;"></div>
<div class="r" style="left:607px;top:409px;width:81px;height:17px;background:#fff;"></div>
<div class="r" style="left:687px;top:409px;width:81px;height:17px;background:#fff;"></div>
<div class="r" style="left:767px;top:409px;width:81px;height:17px;background:#fff;"></div>
<div class="r" style="left:847px;top:409px;width:81px;height:17px;background:#fff;"></div>
<div class="r" style="left:927px;top:409px;width:74px;height:17px;background:#fff;"></div>
<div class="r" style="left:25px;top:425px;width:23px;height:17px;background:#e8e8e8;"></div>
<div class="r" style="left:47px;top:425px;width:81px;height:17px;background:#e6e6e6;"></div>
<div class="r" style="left:127px;top:425px;width:81px;height:17px;background:#fff;"></div>
<div class="r" style="left:207px;top:425px;width:81px;height:17px;background:#fff;"></div>
<div class="r" style="left:287px;top:425px;width:81px;height:17px;background:#e6e6e6;"></div>
<div class="r" style="left:367px;top:425px;width:81px;height:17px;background:#fff;"></div>
<div class="r" style="left:447px;top:425px;width:81px;height:17px;background:#fff;"></div>
<div class="r" style="left:527px;top:425px;width:81px;height:17px;background:#e6e6e6;"></div>
<div class="r" style="left:607px;top:425px;width:81px;height:17px;background:#fff;"></div>
<div class="r" style="left:687px;top:425px;width:81px;height:17px;background:#fff;"></div>
<div class="r" style="left:767px;top:425px;width:81px;height:17px;background:#fff;"></div>
<div class="r" style="left:847px;top:425px;width:81px;height:17px;background:#fff;"></div>
<div class="r" style="left:927px;top:425px;width:74px;height:17px;background:#fff;"></div>
<div class="r" style="left:25px;top:341px;width:1px;height:101px;background:#cdcdcd;"></div>
<div class="r" style="left:47px;top:341px;width:1px;height:101px;background:#cdcdcd;"></div>
<div class="r" style="left:127px;top:341px;width:1px;height:101px;background:#cdcdcd;"></div>
<div class="r" style="left:207px;top:341px;width:1px;height:101px;background:#cdcdcd;"></div>
<div class="r" style="left:287px;top:341px;width:1px;height:101px;background:#cdcdcd;"></div>
<div class="r" style="left:367px;top:341px;width:1px;height:101px;background:#cdcdcd;"></div>
<div class="r" style="left:447px;top:341px;width:1px;height:101px;background:#cdcdcd;"></div>
<div class="r" style="left:527px;top:341px;width:1px;height:101px;background:#cdcdcd;"></div>
<div class="r" style="left:607px;top:341px;width:1px;height:101px;background:#cdcdcd;"></div>
<div class="r" style="left:687px;top:341px;width:1px;height:101px;background:#cdcdcd;"></div>
<div class="r" style="left:767px;top:341px;width:1px;height:101px;background:#cdcdcd;"></div>
<div class="r" style="left:847px;top:341px;width:1px;height:101px;background:#cdcdcd;"></div>
<div class="r" style="left:927px;top:341px;width:1px;height:101px;background:#cdcdcd;"></div>
<div class="r" style="left:1000px;top:341px;width:1px;height:101px;background:#cdcdcd;"></div>
<div class="r" style="left:25px;top:341px;width:976px;height:1px;background:#cdcdcd;"></div>
<div class="r" style="left:25px;top:361px;width:976px;height:1px;background:#cdcdcd;"></div>
<div class="r" style="left:25px;top:377px;width:976px;height:1px;background:#cdcdcd;"></div>
<div class="r" style="left:25px;top:393px;width:976px;height:1px;background:#cdcdcd;"></div>
<div class="r" style="left:25px;top:409px;width:976px;height:1px;background:#cdcdcd;"></div>
<div class="r" style="left:25px;top:425px;width:976px;height:1px;background:#cdcdcd;"></div>
<div class="r" style="left:25px;top:441px;width:976px;height:1px;background:#cdcdcd;"></div>
<div class="t" style="left:52px;top:344.11px;font-size:10.5px;color:#2a2a2a;letter-spacing:-0.2px;">Line No.</div>
<div class="t" style="left:132px;top:344.11px;font-size:10.5px;color:#2a2a2a;letter-spacing:-0.2px;">Resource Code</div>
<div class="t" style="left:212px;top:344.11px;font-size:10.5px;color:#2a2a2a;letter-spacing:-0.2px;">Resource Name</div>
<div class="t" style="left:292px;top:344.11px;font-size:10.5px;color:#2a2a2a;letter-spacing:-0.2px;">Resource Type</div>
<div class="t" style="left:372px;top:344.11px;font-size:10.5px;color:#2a2a2a;letter-spacing:-0.2px;">Issue Type</div>
<div class="t" style="left:452px;top:344.11px;font-size:10.5px;color:#2a2a2a;letter-spacing:-0.2px;">Machine Code</div>
<div class="t" style="left:532px;top:344.11px;font-size:10.5px;color:#2a2a2a;letter-spacing:-0.2px;">Machine Line ...</div>
<div class="t" style="left:612px;top:344.11px;font-size:10.5px;color:#2a2a2a;letter-spacing:-0.2px;">Number of Re...</div>
<div class="t" style="left:692px;top:344.11px;font-size:10.5px;color:#2a2a2a;letter-spacing:-0.2px;">Has Cycles</div>
<div class="t" style="left:772px;top:344.11px;font-size:10.5px;color:#2a2a2a;letter-spacing:-0.2px;">Cycle Capacity</div>
<div class="t" style="left:852px;top:344.11px;font-size:10.5px;color:#2a2a2a;letter-spacing:-0.2px;">Queue Time</div>
<div class="t" style="left:932px;top:344.11px;font-size:10.5px;color:#2a2a2a;letter-spacing:-0.2px;">Queue Rate</div>
<div class="t" style="right:937px;top:364.11px;font-size:10.5px;color:#000;text-align:right;letter-spacing:-0.5px;">2</div>
<svg class="r" style="left:129px;top:365px" width="12" height="9" viewBox="0 0 12 9" shape-rendering="crispEdges"><rect x="6" y="0" width="2" height="1" fill="#3b2a06"/><rect x="6" y="1" width="1" height="1" fill="#3b2a06"/><rect x="7" y="1" width="1" height="1" fill="#e9a514"/><rect x="8" y="1" width="1" height="1" fill="#3b2a06"/><rect x="0" y="2" width="7" height="1" fill="#3b2a06"/><rect x="7" y="2" width="2" height="1" fill="#e9a514"/><rect x="9" y="2" width="1" height="1" fill="#3b2a06"/><rect x="0" y="3" width="1" height="1" fill="#3b2a06"/><rect x="1" y="3" width="9" height="1" fill="#f2b21e"/><rect x="10" y="3" width="1" height="1" fill="#3b2a06"/><rect x="0" y="4" width="1" height="1" fill="#3b2a06"/><rect x="1" y="4" width="10" height="1" fill="#f2b21e"/><rect x="11" y="4" width="1" height="1" fill="#3b2a06"/><rect x="0" y="5" width="1" height="1" fill="#3b2a06"/><rect x="1" y="5" width="9" height="1" fill="#e9a514"/><rect x="10" y="5" width="1" height="1" fill="#3b2a06"/><rect x="0" y="6" width="7" height="1" fill="#3b2a06"/><rect x="7" y="6" width="2" height="1" fill="#e9a514"/><rect x="9" y="6" width="1" height="1" fill="#3b2a06"/><rect x="6" y="7" width="1" height="1" fill="#3b2a06"/><rect x="7" y="7" width="1" height="1" fill="#e9a514"/><rect x="8" y="7" width="1" height="1" fill="#3b2a06"/><rect x="6" y="8" width="2" height="1" fill="#3b2a06"/></svg>
<div class="t" style="left:146px;top:364.11px;font-size:10.5px;color:#000;letter-spacing:-0.5px;">09</div>
<div class="t" style="left:210px;top:364.11px;font-size:10.5px;color:#000;">Machnine2</div>
<div class="t" style="left:290px;top:364.11px;font-size:10.5px;color:#000;">Machine</div>
<div class="t" style="left:370px;top:364.11px;font-size:10.5px;color:#000;">Manual</div>
<svg class="r" style="left:437px;top:366px" width="7" height="4.0" viewBox="0 0 7 4.0"><path d="M0 0 H7 L3.5 4.0 Z" fill="#222"/></svg>
<div class="t" style="right:457px;top:364.11px;font-size:10.5px;color:#000;text-align:right;letter-spacing:-0.5px;">0</div>
<div class="t" style="right:377px;top:364.11px;font-size:10.5px;color:#000;text-align:right;letter-spacing:-0.5px;">1</div>
<div class="r" style="left:721px;top:363px;width:12px;height:12px;background:#fff;border:1px solid #7c7c7c;"></div>
<div class="t" style="right:217px;top:364.11px;font-size:10.5px;color:#000;text-align:right;letter-spacing:-0.5px;">1.000</div>
<div class="t" style="right:137px;top:364.11px;font-size:10.5px;color:#000;text-align:right;letter-spacing:-0.5px;">0.000</div>
<div class="t" style="left:930px;top:364.11px;font-size:10.5px;color:#000;">Fixed Minute</div>
<svg class="r" style="left:997px;top:366px" width="3" height="4" viewBox="0 0 3 4"><path d="M0 0 H3 V3.5 Z" fill="#222"/></svg>
<div class="t" style="right:937px;top:380.11px;font-size:10.5px;color:#000;text-align:right;letter-spacing:-0.5px;">8</div>
<svg class="r" style="left:129px;top:381px" width="12" height="9" viewBox="0 0 12 9" shape-rendering="crispEdges"><rect x="6" y="0" width="2" height="1" fill="#3b2a06"/><rect x="6" y="1" width="1" height="1" fill="#3b2a06"/><rect x="7" y="1" width="1" height="1" fill="#e9a514"/><rect x="8" y="1" width="1" height="1" fill="#3b2a06"/><rect x="0" y="2" width="7" height="1" fill="#3b2a06"/><rect x="7" y="2" width="2" height="1" fill="#e9a514"/><rect x="9" y="2" width="1" height="1" fill="#3b2a06"/><rect x="0" y="3" width="1" height="1" fill="#3b2a06"/><rect x="1" y="3" width="9" height="1" fill="#f2b21e"/><rect x="10" y="3" width="1" height="1" fill="#3b2a06"/><rect x="0" y="4" width="1" height="1" fill="#3b2a06"/><rect x="1" y="4" width="10" height="1" fill="#f2b21e"/><rect x="11" y="4" width="1" height="1" fill="#3b2a06"/><rect x="0" y="5" width="1" height="1" fill="#3b2a06"/><rect x="1" y="5" width="9" height="1" fill="#e9a514"/><rect x="10" y="5" width="1" height="1" fill="#3b2a06"/><rect x="0" y="6" width="7" height="1" fill="#3b2a06"/><rect x="7" y="6" width="2" height="1" fill="#e9a514"/><rect x="9" y="6" width="1" height="1" fill="#3b2a06"/><rect x="6" y="7" width="1" height="1" fill="#3b2a06"/><rect x="7" y="7" width="1" height="1" fill="#e9a514"/><rect x="8" y="7" width="1" height="1" fill="#3b2a06"/><rect x="6" y="8" width="2" height="1" fill="#3b2a06"/></svg>
<div class="t" style="left:146px;top:380.11px;font-size:10.5px;color:#000;letter-spacing:-0.5px;">06</div>
<div class="t" style="left:210px;top:380.11px;font-size:10.5px;color:#000;">Labour</div>
<div class="t" style="left:290px;top:380.11px;font-size:10.5px;color:#000;">Labour</div>
<div class="t" style="left:370px;top:380.11px;font-size:10.5px;color:#000;">Manual</div>
<svg class="r" style="left:437px;top:382px" width="7" height="4.0" viewBox="0 0 7 4.0"><path d="M0 0 H7 L3.5 4.0 Z" fill="#222"/></svg>
<div class="t" style="right:457px;top:380.11px;font-size:10.5px;color:#000;text-align:right;letter-spacing:-0.5px;">0</div>
<div class="t" style="right:377px;top:380.11px;font-size:10.5px;color:#000;text-align:right;letter-spacing:-0.5px;">1</div>
<div class="r" style="left:721px;top:379px;width:12px;height:12px;background:#fff;border:1px solid #7c7c7c;"></div>
<div class="t" style="right:217px;top:380.11px;font-size:10.5px;color:#000;text-align:right;letter-spacing:-0.5px;">1.000</div>
<div class="t" style="right:137px;top:380.11px;font-size:10.5px;color:#000;text-align:right;letter-spacing:-0.5px;">0.000</div>
<div class="t" style="left:930px;top:380.11px;font-size:10.5px;color:#000;">Fixed Minute</div>
<svg class="r" style="left:997px;top:382px" width="3" height="4" viewBox="0 0 3 4"><path d="M0 0 H3 V3.5 Z" fill="#222"/></svg>
<div class="t" style="right:937px;top:396.11px;font-size:10.5px;color:#000;text-align:right;letter-spacing:-0.5px;">12</div>
<div class="t" style="left:290px;top:396.11px;font-size:10.5px;color:#000;">Machine</div>
<div class="t" style="left:370px;top:396.11px;font-size:10.5px;color:#000;">Manual</div>
<svg class="r" style="left:437px;top:398px" width="7" height="4.0" viewBox="0 0 7 4.0"><path d="M0 0 H7 L3.5 4.0 Z" fill="#222"/></svg>
<div class="t" style="right:457px;top:396.11px;font-size:10.5px;color:#000;text-align:right;letter-spacing:-0.5px;">0</div>
<div class="t" style="right:377px;top:396.11px;font-size:10.5px;color:#000;text-align:right;letter-spacing:-0.5px;">0</div>
<div class="r" style="left:721px;top:395px;width:12px;height:12px;background:#fff;border:1px solid #7c7c7c;"></div>
<div class="t" style="right:217px;top:396.11px;font-size:10.5px;color:#000;text-align:right;letter-spacing:-0.5px;">1.000</div>
<div class="t" style="right:137px;top:396.11px;font-size:10.5px;color:#000;text-align:right;letter-spacing:-0.5px;">0.000</div>
<div class="t" style="left:930px;top:396.11px;font-size:10.5px;color:#000;">Fixed Minute</div>
<svg class="r" style="left:997px;top:398px" width="3" height="4" viewBox="0 0 3 4"><path d="M0 0 H3 V3.5 Z" fill="#222"/></svg>
<div class="r" style="left:62px;top:447px;width:226px;height:6px;background:#dcdcdc;border:none;border-radius:3px;"></div>
<div class="t" style="left:12px;top:486.11px;font-size:10.5px;color:#000;">Remarks</div>
<div class="r" style="left:140px;top:484px;width:148px;height:38px;background:#fff;border:1px solid #b9b9b9;border-radius:1.5px;"></div>
<div class="t" style="left:12px;top:527.11px;font-size:10.5px;color:#000;">Journal Remarks</div>
<div class="r" style="left:140px;top:525px;width:148px;height:14px;background:#e6e6e6;border:1px solid #b9b9b9;border-radius:1.5px;"></div>
<div class="t" style="left:317px;top:527.11px;font-size:10.5px;color:#000;">Close Date</div>
<div class="r" style="left:380px;top:525px;width:78px;height:14px;background:#e6e6e6;border:1px solid #b9b9b9;border-radius:1.5px;"></div>
<div class="r" style="left:10px;top:557px;width:65px;height:20px;background:#0a9ae0;"></div>
<div class="t" style="left:10.0px;width:64px;top:561.51px;font-size:10.5px;color:#fff;text-align:center;">OK</div>
<div class="r" style="left:80px;top:557px;width:65px;height:20px;background:#767676;"></div>
<div class="t" style="left:80.0px;width:64px;top:561.51px;font-size:10.5px;color:#fff;text-align:center;">Cancel</div>
</body></html>
